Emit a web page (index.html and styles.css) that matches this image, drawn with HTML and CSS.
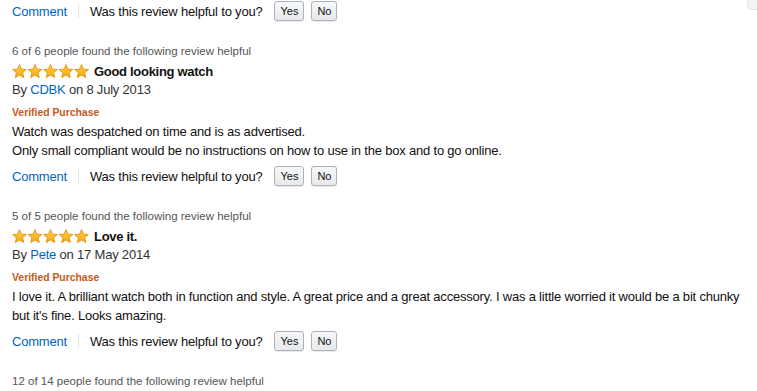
FILE: index.html
```
<!DOCTYPE html>
<html>
<head>
<meta charset="utf-8">
<link rel="stylesheet" href="styles.css">
</head>
<body>
<div class="corner"></div>
<div class="page">
  <div class="actions">
    <a class="link">Comment</a>
    <span class="sep"></span>
    <span class="q">Was this review helpful to you?</span>
    <button class="btn yes">Yes</button>
    <button class="btn no">No</button>
  </div>

  <div class="review">
    <div class="count">6 of 6 people found the following review helpful</div>
    <div class="title-row">
      <svg class="stars" width="78" height="15" viewBox="0 0 78 15">
        <defs>
          <linearGradient id="g" x1="0" y1="0" x2="0" y2="1">
            <stop offset="0" stop-color="#ffd24a"/>
            <stop offset="1" stop-color="#f7a70f"/>
          </linearGradient>
          <polygon id="s" points="7.5,0.6 9.5,5.2 14.4,5.5 10.6,8.7 11.8,13.6 7.5,10.9 3.2,13.6 4.4,8.7 0.6,5.5 5.5,5.2" fill="url(#g)" stroke="#e08a00" stroke-width="0.8" stroke-linejoin="round"/>
        </defs>
        <use href="#s" x="0"/><use href="#s" x="15.5"/><use href="#s" x="31"/><use href="#s" x="46.5"/><use href="#s" x="62"/>
      </svg>
      <span class="title">Good looking watch</span>
    </div>
    <div class="by">By <a class="link">CDBK</a> on 8 July 2013</div>
    <div class="verified">Verified Purchase</div>
    <div class="text">Watch was despatched on time and is as advertised.<br>Only small compliant would be no instructions on how to use in the box and to go online.</div>
    <div class="actions">
      <a class="link">Comment</a>
      <span class="sep"></span>
      <span class="q">Was this review helpful to you?</span>
      <button class="btn yes">Yes</button>
      <button class="btn no">No</button>
    </div>
  </div>

  <div class="review">
    <div class="count">5 of 5 people found the following review helpful</div>
    <div class="title-row">
      <svg class="stars" width="78" height="15" viewBox="0 0 78 15">
        <use href="#s" x="0"/><use href="#s" x="15.5"/><use href="#s" x="31"/><use href="#s" x="46.5"/><use href="#s" x="62"/>
      </svg>
      <span class="title">Love it.</span>
    </div>
    <div class="by">By <a class="link">Pete</a> on 17 May 2014</div>
    <div class="verified">Verified Purchase</div>
    <div class="text">I love it. A brilliant watch both in function and style. A great price and a great accessory. I was a little worried it would be a bit chunky<br>but it's fine. Looks amazing.</div>
    <div class="actions">
      <a class="link">Comment</a>
      <span class="sep"></span>
      <span class="q">Was this review helpful to you?</span>
      <button class="btn yes">Yes</button>
      <button class="btn no">No</button>
    </div>
  </div>

  <div class="review">
    <div class="count">12 of 14 people found the following review helpful</div>
  </div>
</div>
</body>
</html>
```
FILE: styles.css
```
html, body {
  margin: 0;
  padding: 0;
  background: #fff;
}
body {
  font-family: "Liberation Sans", Arial, sans-serif;
  font-size: 13px;
  letter-spacing: -0.2px;
  color: #111;
  overflow: hidden;
}
.corner {
  position: absolute;
  top: 0;
  right: 0;
  width: 9px;
  height: 9px;
  background: #f4f4ef;
  border-left: 1px solid #e4e4de;
  border-bottom: 1px solid #e4e4de;
  border-bottom-left-radius: 5px;
}
.page {
  padding: 1px 0 0 12px;
  white-space: nowrap;
}
.actions {
  display: flex;
  align-items: center;
  height: 20px;
}
.link {
  color: #0066c0;
}
.sep {
  width: 1px;
  height: 14px;
  background: #e3e3e3;
  margin: 0 11px 0 11px;
}
.q {
  color: #111;
  margin-right: 12px;
}
.btn {
  font-family: "Liberation Sans", Arial, sans-serif;
  font-size: 11px;
  letter-spacing: 0;
  color: #111;
  height: 20px;
  padding: 0 5px;
  margin: 0 7px 0 0;
  border: 1px solid #adb1b8;
  border-radius: 3px;
  background: linear-gradient(#f7f8fa, #e7e9ec);
  box-shadow: 0 1px 0 rgba(0,0,0,0.08);
}
.review {
  padding-top: 20px;
}
.count {
  font-size: 11.5px;
  letter-spacing: 0;
  color: #555;
  line-height: 20px;
}
.title-row {
  display: flex;
  align-items: center;
  height: 20px;
}
.stars {
  display: block;
  margin-right: 4px;
}
.title {
  font-weight: bold;
  letter-spacing: -0.3px;
}
.by {
  line-height: 18px;
  color: #333;
}
.verified {
  margin-top: 5px;
  font-size: 10.4px;
  letter-spacing: 0;
  font-weight: bold;
  color: #c45a1a;
  line-height: 18px;
}
.text {
  line-height: 19px;
  color: #111;
}
.review .actions {
  margin-top: 6px;
}
```
